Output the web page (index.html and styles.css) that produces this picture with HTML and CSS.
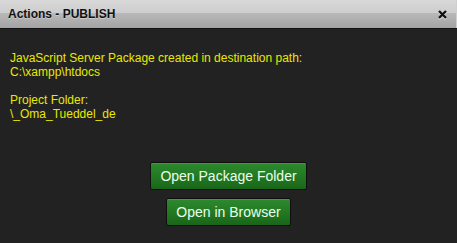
FILE: index.html
```html
<!DOCTYPE html>
<html lang="en">
<head>
  <meta charset="UTF-8" />
  <title>Actions - PUBLISH</title>
  <link rel="stylesheet" href="styles.css">
</head>
<body>
  <div class="dialog">
    <!-- Title Bar -->
    <div class="dialog-header">
      <span class="dialog-title">Actions - PUBLISH</span>
      <span class="dialog-close" title="Close">
        <svg width="9" height="9" viewBox="0 0 9 9">
          <path d="M1 1 L8 8 M8 1 L1 8" stroke="#111" stroke-width="2.4" />
        </svg>
      </span>
    </div>

    <!-- Content -->
    <div class="dialog-content">
      <p class="message">
        JavaScript Server Package created in destination path:<br>
        C:\xampp\htdocs<br>
        <br>
        Project Folder:<br>
        \_Oma_Tueddel_de
      </p>

      <div class="actions">
        <button type="button">Open Package Folder</button>
        <button type="button">Open in Browser</button>
      </div>
    </div>
  </div>
</body>
</html>
```

FILE: styles.css
```css
html, body {
  margin: 0;
  padding: 0;
  height: 100%;
  background-color: #222222;
  font-family: "Liberation Sans", Arial, sans-serif;
}
.dialog {
  height: 100%;
  display: flex;
  flex-direction: column;
}
.dialog-header {
  height: 28px;
  display: flex;
  align-items: center;
  justify-content: space-between;
  padding: 0 10px 0 8px;
  background: linear-gradient(to bottom, #d9d9d9 0%, #cdcdcd 46%, #b9b9b9 47%, #a3a3a3 100%);
  border-bottom: 1px solid #121212;
  box-shadow: inset -1px 0 0 #cfcfcf;
}
.dialog-title {
  font-size: 12px;
  font-weight: bold;
  color: #111;
  text-shadow: 0 1px 0 rgba(255,255,255,0.35);
}
.dialog-close {
  display: flex;
  cursor: pointer;
  filter: drop-shadow(0 1px 0 rgba(255,255,255,0.7));
}
.dialog-content {
  flex: 1;
  padding: 22px 10px 0 10px;
}
.message {
  margin: 0;
  font-size: 12px;
  line-height: 14px;
  color: #e8e800;
}
.actions {
  display: flex;
  flex-direction: column;
  align-items: center;
  gap: 8px;
  margin-top: 41px;
}
.actions button {
  height: 28px;
  padding: 0 9px;
  font-family: "Liberation Sans", Arial, sans-serif;
  font-size: 14px;
  color: #eaffea;
  background: linear-gradient(to bottom, #2d8a2d 0%, #237a23 50%, #196519 100%);
  border: 1px solid #0f0f0f;
  border-radius: 2px;
  box-shadow: inset 0 1px 0 rgba(255,255,255,0.12);
  cursor: pointer;
}
.actions button:hover {
  background: linear-gradient(to bottom, #34983a 0%, #2a862a 100%);
}
```
